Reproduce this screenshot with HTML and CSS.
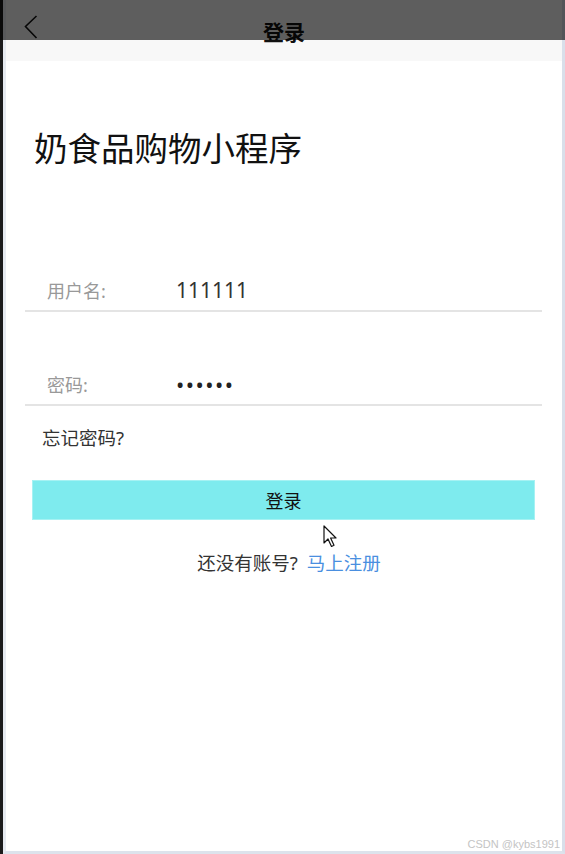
FILE: index.html
```html
<!DOCTYPE html>
<html lang="zh-CN">
<head>
  <meta charset="UTF-8">
  <title>登录</title>
  <link rel="stylesheet" href="styles.css">
</head>
<body>
  <div class="screen">

    <!-- Nav bar -->
    <div class="navbar">
      <svg class="back" width="14" height="24" viewBox="0 0 14 24">
        <path d="M12.5 1 L1.5 11.5 L12.5 23" fill="none" stroke="#111" stroke-width="1.6"/>
      </svg>
      <div class="nav-title">登录</div>
    </div>
    <div class="dim"></div>

    <h1 class="app-title">奶食品购物小程序</h1>

    <!-- Form -->
    <div class="field">
      <span class="label">用户名:</span>
      <span class="value">111111</span>
    </div>
    <div class="field pwd">
      <span class="label">密码:</span>
      <span class="value dots">••••••</span>
    </div>

    <div class="forgot">忘记密码?</div>

    <div class="btn-wrap">
      <button class="login-btn">登录</button>
      <svg class="cursor" width="16" height="24" viewBox="0 0 16 24">
        <path d="M1 1 L1 18 L5 14 L8.5 21.5 L11 20.3 L7.6 13 L13 13 Z" fill="#fff" stroke="#111" stroke-width="1.2" stroke-linejoin="round"/>
      </svg>
    </div>

    <div class="register">还没有账号? <a href="#">马上注册</a></div>

    <div class="watermark">CSDN @kybs1991</div>
  </div>
</body>
</html>
```

FILE: styles.css
```css
body {
  margin: 0;
  padding: 0;
  background-color: #1b1b1b;
  font-family: "Noto Sans", "Noto Sans CJK SC", sans-serif;
  overflow: hidden;
}

.screen {
  position: relative;
  margin-left: 3px;
  height: 851px;
  background-color: #fff;
  border-left: 3px solid #e6eaf0;
  border-right: 3px solid #d9dfea;
  border-bottom: 3px solid #dde3ec;
  display: flex;
  flex-direction: column;
}

.navbar {
  position: relative;
  height: 61px;
  background-color: #f8f8f8;
}

.back {
  position: absolute;
  left: 18px;
  top: 15px;
}

.nav-title {
  text-align: center;
  font-size: 21px;
  font-weight: bold;
  line-height: 24px;
  padding-top: 20px;
  color: #111;
}

/* dark veil over the top of the screen */
.dim {
  position: fixed;
  left: 0;
  top: 0;
  right: 0;
  height: 40px;
  background-color: rgba(0, 0, 0, 0.62);
}

.app-title {
  margin: 64px 0 0 28px;
  font-size: 33.5px;
  font-weight: normal;
  line-height: 46px;
  color: #111;
}

.field {
  display: flex;
  align-items: center;
  margin: 99px 20px 0 19px;
  padding-left: 22px;
  height: 40px;
  border-bottom: 2px solid #e4e4e4;
}

.field.pwd {
  margin-top: 52px;
}

.label {
  width: 129px;
  font-size: 18px;
  color: #999;
}

.value {
  font-size: 21px;
  color: #333;
}

.dots {
  font-size: 22px;
  letter-spacing: 1.5px;
  color: #222;
}

.forgot {
  margin: 20px 0 0 36px;
  font-size: 18.5px;
  line-height: 24px;
  color: #333;
}

.btn-wrap {
  position: relative;
  margin: 30px 27px 0 26px;
}

.login-btn {
  display: block;
  width: 100%;
  height: 40px;
  border: 1px solid #a6f2f3;
  background-color: #7eebee;
  font-family: inherit;
  font-size: 18px;
  color: #111;
  padding: 0;
}

.cursor {
  position: absolute;
  left: 291px;
  top: 45px;
}

.register {
  margin-top: 31px;
  padding-left: 10px;
  text-align: center;
  font-size: 18.5px;
  line-height: 24px;
  word-spacing: 4px;
  color: #333;
}

.register a {
  color: #4a8fe0;
  text-decoration: none;
}

.watermark {
  position: absolute;
  right: 2px;
  bottom: 1px;
  font-family: "Liberation Sans", sans-serif;
  font-size: 11px;
  color: #c4c4c4;
}
```
